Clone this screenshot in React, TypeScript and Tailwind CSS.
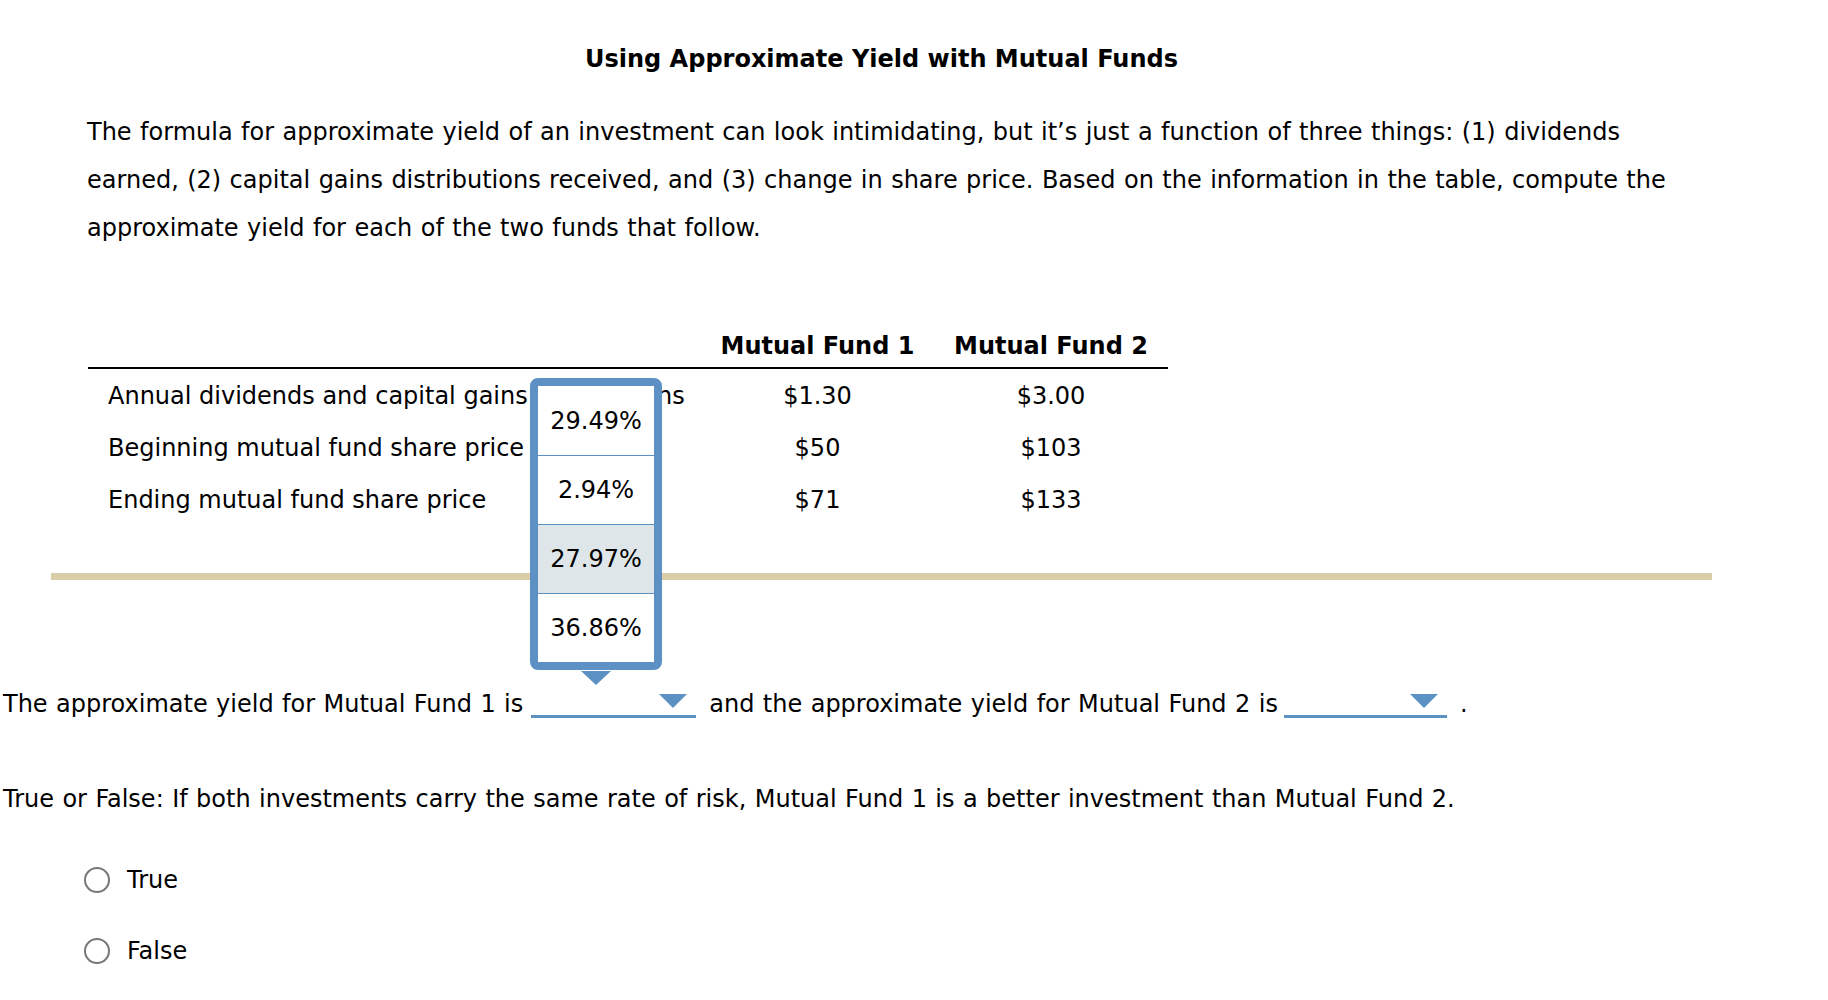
import React from "react";

function Blank({ className }: { className?: string }) {
  return (
    <div className={"relative h-[28px] shrink-0 border-b-[3px] border-[#5d91c3] " + (className ?? "")}>
      <div className="absolute right-[9px] top-[4px] h-0 w-0 border-l-[14px] border-r-[14px] border-t-[14px] border-l-transparent border-r-transparent border-t-[#5d91c3]" />
    </div>
  );
}

function Radio({ label, className }: { label: string; className?: string }) {
  return (
    <div className={"flex h-[48px] items-center pl-[84px] " + (className ?? "")}>
      <div className="h-[26px] w-[26px] rounded-full border-2 border-[#777777] bg-white" />
      <span className="ml-[17px]">{label}</span>
    </div>
  );
}

export default function App() {
  const rows = [
    ["Annual dividends and capital gains distributions", "$1.30", "$3.00"],
    ["Beginning mutual fund share price", "$50", "$103"],
    ["Ending mutual fund share price", "$71", "$133"],
  ];
  const options = ["29.49%", "2.94%", "27.97%", "36.86%"];
  return (
    <div className="relative min-h-[1000px] bg-white font-['DejaVu_Sans',sans-serif] text-[24px] text-black">
      <div className="ml-[51px] w-[1661px]">
        <h1 className="pt-[41px] text-center text-[24px] font-bold leading-[36px]">
          Using Approximate Yield with Mutual Funds
        </h1>
        <p className="mt-[31px] px-[36px] leading-[48px] [word-spacing:0.8px]">
          The formula for approximate yield of an investment can look intimidating, but it’s just a function of three
          things: (1) dividends earned, (2) capital gains distributions received, and (3) change in share price. Based
          on the information in the table, compute the approximate yield for each of the two funds that follow.
        </p>
        <div className="ml-[37px] mt-[76px] w-[1080px]">
          <div className="grid h-[41px] grid-cols-[613px_233px_234px] items-center border-b-2 border-black pb-[5px] font-bold">
            <div />
            <div className="text-center">Mutual Fund 1</div>
            <div className="text-center">Mutual Fund 2</div>
          </div>
          <div className="pt-[1px]">
            {rows.map((r) => (
              <div key={r[0]} className="grid h-[52px] grid-cols-[613px_233px_234px] items-center">
                <div className="whitespace-nowrap pl-[20px]">{r[0]}</div>
                <div className="text-center">{r[1]}</div>
                <div className="text-center">{r[2]}</div>
              </div>
            ))}
          </div>
        </div>
        <div className="mt-[47px] h-[7px] bg-[#d9cea7]" />
      </div>

      <div className="mt-[100px] flex h-[48px] items-center whitespace-nowrap pl-[3px] [word-spacing:0.8px]">
        <span>The approximate yield for Mutual Fund 1 is</span>
        <Blank className="ml-[8px] w-[165px]" />
        <span className="ml-[13px]">and the approximate yield for Mutual Fund 2 is</span>
        <Blank className="ml-[6px] w-[163px]" />
        <span className="ml-[13px]">.</span>
      </div>

      <div className="mt-[47px] flex h-[48px] items-center whitespace-nowrap pl-[3px] [word-spacing:0.8px]">
        True or False: If both investments carry the same rate of risk, Mutual Fund 1 is a better investment than Mutual
        Fund 2.
      </div>

      <Radio label="True" className="mt-[33px]" />
      <Radio label="False" className="mt-[23px]" />

      <div className="absolute left-[530px] top-[378px] w-[132px] rounded-[8px] border-[8px] border-[#5d91c3] bg-white">
        {options.map((o, i) => (
          <div
            key={o}
            className={
              "flex h-[69px] items-center justify-center " +
              (i > 0 ? "border-t border-[#5d91c3] " : "") +
              (i === 2 ? "bg-[#dfe6e9]" : "bg-white")
            }
          >
            {o}
          </div>
        ))}
      </div>
      <div className="absolute left-[581px] top-[671px] h-0 w-0 border-l-[15px] border-r-[15px] border-t-[14px] border-l-transparent border-r-transparent border-t-[#5d91c3]" />
    </div>
  );
}
